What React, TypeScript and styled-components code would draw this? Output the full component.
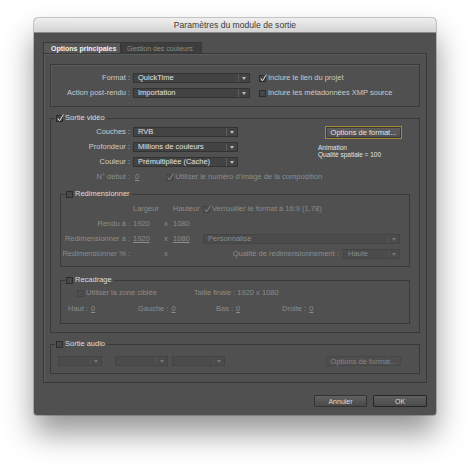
import React from "react";
import styled, { createGlobalStyle } from "styled-components";

const GlobalStyle = createGlobalStyle`
  html, body {
    margin: 0;
    padding: 0;
    background: #ffffff;
  }
  body {
    font-family: "Liberation Sans", Arial, sans-serif;
  }
  * {
    box-sizing: border-box;
  }
`;

const Page = styled.div`
  width: 470px;
  height: 464px;
  padding: 18px 0 0 34px;
  overflow: hidden;
`;

const Dialog = styled.div`
  width: 402px;
  background: #505050;
  border-radius: 4px 4px 3px 3px;
  box-shadow: 0 18px 30px rgba(0, 0, 0, 0.42), 0 0 0 1px rgba(0, 0, 0, 0.2);
  overflow: hidden;
`;

const TitleBar = styled.div`
  height: 15px;
  background: linear-gradient(#efefef, #d3d3d3);
  border-bottom: 1px solid #8a8a8a;
  color: #3c3c3c;
  font-size: 8.6px;
  line-height: 14px;
  text-align: center;
`;

const Body = styled.div`
  padding: 9px 9px 8px;
`;

const TabRow = styled.div`
  display: flex;
  height: 11px;
`;

const Tab = styled.div<{ $active?: boolean; $w: number }>`
  width: ${(p) => p.$w}px;
  padding-left: ${(p) => (p.$active ? 7 : 5)}px;
  font-size: 7px;
  line-height: 11px;
  white-space: nowrap;
  background: ${(p) => (p.$active ? "#585858" : "#3d3d3d")};
  color: ${(p) => (p.$active ? "#f2f2f2" : "#8e8e8e")};
  font-weight: ${(p) => (p.$active ? 700 : 400)};
  border: 1px solid #383838;
  border-bottom: none;
`;

const Panel = styled.div`
  border: 1px solid #383838;
  box-shadow: inset 1px 1px 0 #5c5c5c;
  padding: 10px 6px 8px;
`;

const FormatBox = styled.div`
  border: 1px solid #3a3a3a;
  box-shadow: inset 1px 1px 0 #5b5b5b;
  padding: 8px 0;
  display: grid;
  grid-template-columns: 79px 117px auto;
  grid-auto-rows: 10px;
  column-gap: 3px;
  row-gap: 5px;
  align-items: center;
`;

const Label = styled.span<{ $dim?: boolean }>`
  font-size: 7.5px;
  line-height: 10px;
  text-align: right;
  white-space: nowrap;
  color: ${(p) => (p.$dim ? "#8c8c8c" : "#cacaca")};
`;

const Text = styled.span<{ $dim?: boolean }>`
  font-size: 7.5px;
  line-height: 10px;
  white-space: nowrap;
  color: ${(p) => (p.$dim ? "#8c8c8c" : "#cacaca")};
`;

const Value = styled.span<{ $dim?: boolean }>`
  font-size: 7.5px;
  line-height: 10px;
  white-space: nowrap;
  color: ${(p) => (p.$dim ? "#8c8c8c" : "#cacaca")};
  text-decoration: underline;
  text-underline-offset: 1px;
`;

const Group = styled.fieldset<{ $mt: number; $inset?: boolean; $pt: number; $pb: number }>`
  margin: ${(p) => p.$mt}px ${(p) => (p.$inset ? 9 : 0)}px 0;
  padding: ${(p) => p.$pt}px 0 ${(p) => p.$pb}px;
  min-width: 0;
  border: 1px solid #393939;
`;

const Legend = styled.legend`
  margin-left: 4px;
  padding: 0 2px 0 1px;
  display: flex;
  align-items: center;
  gap: 2px;
  font-size: 7.5px;
  line-height: 8px;
  height: 8px;
  color: #dcdcdc;
`;

const Box = styled.span<{ $dim?: boolean }>`
  position: relative;
  width: 7px;
  height: 7px;
  flex-shrink: 0;
  border: 1px solid ${(p) => (p.$dim ? "#444444" : "#2c2c2c")};
  background: ${(p) => (p.$dim ? "#4d4d4d" : "#474747")};

  svg {
    position: absolute;
    left: 0;
    top: -2px;
  }
`;

const Check = ({ checked, dim }: { checked?: boolean; dim?: boolean }) => (
  <Box $dim={dim}>
    {checked && (
      <svg width="7" height="8" viewBox="0 0 7 8">
        <path
          d="M0.8 4.6 L2.5 6.8 L6.4 0.6"
          fill="none"
          stroke={dim ? "#8a8a8a" : "#e6e6e6"}
          strokeWidth="1"
        />
      </svg>
    )}
  </Box>
);

const Option = styled.span<{ $ml?: number }>`
  display: inline-flex;
  align-items: center;
  gap: 2px;
  margin-left: ${(p) => p.$ml ?? 0}px;
  white-space: nowrap;
`;

const SelectBox = styled.div<{ $w?: number; $dim?: boolean }>`
  width: ${(p) => (p.$w ? `${p.$w}px` : "100%")};
  height: 10px;
  display: flex;
  flex-shrink: 0;
  background: ${(p) => (p.$dim ? "#4b4b4b" : "#434343")};
  border: 1px solid ${(p) => (p.$dim ? "#444444" : "#333333")};
  color: ${(p) => (p.$dim ? "#8a8a8a" : "#e2e2e2")};
  font-size: 7.5px;
  line-height: 8px;
`;

const SelectText = styled.span`
  flex: 1;
  padding-left: 4px;
  white-space: nowrap;
  overflow: hidden;
`;

const Caret = styled.span<{ $dim?: boolean }>`
  width: 11px;
  border-left: 1px solid ${(p) => (p.$dim ? "#555555" : "#5c5c5c")};
  display: flex;
  align-items: center;
  justify-content: center;

  &::after {
    content: "";
    border-left: 2px solid transparent;
    border-right: 2px solid transparent;
    border-top: 3px solid ${(p) => (p.$dim ? "#777777" : "#bdbdbd")};
  }
`;

const Select = ({ value, w, dim }: { value?: string; w?: number; dim?: boolean }) => (
  <SelectBox $w={w} $dim={dim}>
    <SelectText>{value}</SelectText>
    <Caret $dim={dim} />
  </SelectBox>
);

const VideoTop = styled.div`
  display: flex;
  align-items: flex-start;
`;

const VideoGrid = styled.div`
  display: grid;
  grid-template-columns: 79px 105px;
  grid-auto-rows: 10px;
  column-gap: 3px;
  row-gap: 5px;
  align-items: center;
`;

const StartCell = styled.div`
  display: flex;
  align-items: center;
  padding-left: 2px;
  gap: 27px;
`;

const FormatInfo = styled.div`
  margin-left: 80px;
  margin-top: -1px;
  display: flex;
  flex-direction: column;
`;

const InfoLine = styled.span`
  font-size: 6.5px;
  line-height: 7px;
  color: #e4e4e4;
  white-space: nowrap;
`;

const Button = styled.div<{ $w: number; $h: number; $focus?: boolean; $dim?: boolean; $ml?: number }>`
  width: ${(p) => p.$w}px;
  height: ${(p) => p.$h}px;
  margin-left: ${(p) => p.$ml ?? 0}px;
  display: flex;
  align-items: center;
  justify-content: center;
  flex-shrink: 0;
  font-size: 7.5px;
  white-space: nowrap;
  color: ${(p) => (p.$dim ? "#858585" : "#e2e2e2")};
  background: ${(p) => (p.$dim ? "#4e4e4e" : "linear-gradient(#5e5e5e, #4f4f4f)")};
  border: 1px solid ${(p) => (p.$focus ? "#a48a34" : p.$dim ? "#474747" : "#2e2e2e")};
  box-shadow: ${(p) => (p.$focus ? "inset 0 0 0 1px #3a3a3a" : "none")};
`;

const InfoBlock = styled.div`
  margin-top: 5px;
  display: flex;
  flex-direction: column;
`;

const ResizeGrid = styled.div`
  display: grid;
  grid-template-columns: 69px 28px 6px 27px 197px;
  grid-auto-rows: 10px;
  column-gap: 3px;
  row-gap: 5px;
  align-items: center;
`;

const Col = styled.div<{ $c: number }>`
  grid-column: ${(p) => p.$c};
  display: flex;
  align-items: center;
  white-space: nowrap;
`;

const QualityCell = styled.div`
  grid-column: 5;
  display: flex;
  align-items: center;
  justify-content: flex-end;
  gap: 4px;
`;

const CropRow = styled.div<{ $pl: number; $mt?: number }>`
  display: flex;
  align-items: center;
  height: 10px;
  padding-left: ${(p) => p.$pl}px;
  margin-top: ${(p) => p.$mt ?? 0}px;
`;

const CropCell = styled.div<{ $w?: number }>`
  width: ${(p) => (p.$w ? `${p.$w}px` : "auto")};
  flex-shrink: 0;
  display: flex;
  align-items: center;
  gap: 3px;
  white-space: nowrap;
`;

const AudioRow = styled.div`
  display: flex;
  align-items: center;
  height: 10px;
  padding: 0 18px 0 7px;
  gap: 13px;
`;

const AudioPair = styled.div`
  display: flex;
  gap: 4px;
`;

const Footer = styled.div`
  display: flex;
  justify-content: flex-end;
  gap: 6px;
  margin-top: 12px;
`;

const DialogButton = styled.div<{ $w: number; $default?: boolean }>`
  width: ${(p) => p.$w}px;
  height: 12px;
  display: flex;
  align-items: center;
  justify-content: center;
  font-size: 7px;
  color: #dedede;
  background: linear-gradient(#606060, #4a4a4a);
  border: ${(p) => (p.$default ? "1.5px solid #262626" : "1px solid #333333")};
  border-radius: 1px;
`;

export default function App() {
  return (
    <>
      <GlobalStyle />
      <Page>
        <Dialog>
          <TitleBar>Paramètres du module de sortie</TitleBar>
          <Body>
            <TabRow>
              <Tab $active $w={78}>Options principales</Tab>
              <Tab $w={81}>Gestion des couleurs</Tab>
            </TabRow>
            <Panel>
              <FormatBox>
                <Label>Format :</Label>
                <Select value="QuickTime" w={117} />
                <Option $ml={6}>
                  <Check checked />
                  <Text>Inclure le lien du projet</Text>
                </Option>
                <Label>Action post-rendu :</Label>
                <Select value="Importation" w={117} />
                <Option $ml={6}>
                  <Check />
                  <Text>Inclure les métadonnées XMP source</Text>
                </Option>
              </FormatBox>

              <Group $mt={7} $pt={5} $pb={8}>
                <Legend>
                  <Check checked />
                  Sortie vidéo
                </Legend>
                <VideoTop>
                  <VideoGrid>
                    <Label>Couches :</Label>
                    <Select value="RVB" w={105} />
                    <Label>Profondeur :</Label>
                    <Select value="Millions de couleurs" w={105} />
                    <Label>Couleur :</Label>
                    <Select value="Prémultipliée (Cache)" w={105} />
                    <Label $dim>N° début :</Label>
                    <StartCell>
                      <Value $dim>0</Value>
                      <Option>
                        <Check checked dim />
                        <Text $dim>Utiliser le numéro d'image de la composition</Text>
                      </Option>
                    </StartCell>
                  </VideoGrid>
                  <FormatInfo>
                    <Button $w={77} $h={13} $ml={7} $focus>
                      Options de format...
                    </Button>
                    <InfoBlock>
                      <InfoLine>Animation</InfoLine>
                      <InfoLine>Qualité spatiale = 100</InfoLine>
                    </InfoBlock>
                  </FormatInfo>
                </VideoTop>

                <Group $mt={8} $inset $pt={6} $pb={7}>
                  <Legend>
                    <Check />
                    Redimensionner
                  </Legend>
                  <ResizeGrid>
                    <Col $c={2}>
                      <Text $dim>Largeur</Text>
                    </Col>
                    <Col $c={4}>
                      <Text $dim>Hauteur</Text>
                    </Col>
                    <Col $c={5}>
                      <Option>
                        <Check checked dim />
                        <Text $dim>Verrouiller le format à 16:9 (1,78)</Text>
                      </Option>
                    </Col>

                    <Label $dim>Rendu à :</Label>
                    <Text $dim>1920</Text>
                    <Text $dim>x</Text>
                    <Text $dim>1080</Text>
                    <span />

                    <Label $dim>Redimensionner à :</Label>
                    <Value $dim>1920</Value>
                    <Text $dim>x</Text>
                    <Value $dim>1080</Value>
                    <Select value="Personnalisé" dim />

                    <Label $dim>Redimensionner % :</Label>
                    <Col $c={3}>
                      <Text $dim>x</Text>
                    </Col>
                    <QualityCell>
                      <Text $dim>Qualité de redimensionnement :</Text>
                      <Select value="Haute" w={57} dim />
                    </QualityCell>
                  </ResizeGrid>
                </Group>

                <Group $mt={9} $inset $pt={4} $pb={9}>
                  <Legend>
                    <Check />
                    Recadrage
                  </Legend>
                  <CropRow $pl={16}>
                    <CropCell $w={117}>
                      <Option>
                        <Check dim />
                        <Text $dim>Utiliser la zone ciblée</Text>
                      </Option>
                    </CropCell>
                    <CropCell>
                      <Text $dim>Taille finale : 1920 x 1080</Text>
                    </CropCell>
                  </CropRow>
                  <CropRow $pl={7} $mt={6}>
                    <CropCell $w={70}>
                      <Text $dim>Haut :</Text>
                      <Value $dim>0</Value>
                    </CropCell>
                    <CropCell $w={78}>
                      <Text $dim>Gauche :</Text>
                      <Value $dim>0</Value>
                    </CropCell>
                    <CropCell $w={66}>
                      <Text $dim>Bas :</Text>
                      <Value $dim>0</Value>
                    </CropCell>
                    <CropCell>
                      <Text $dim>Droite :</Text>
                      <Value $dim>0</Value>
                    </CropCell>
                  </CropRow>
                </Group>
              </Group>

              <Group $mt={7} $pt={8} $pb={7}>
                <Legend>
                  <Check />
                  Sortie audio
                </Legend>
                <AudioRow>
                  <Select w={44} dim />
                  <AudioPair>
                    <Select w={53} dim />
                    <Select w={53} dim />
                  </AudioPair>
                  <Button $w={75} $h={10} $dim style={{ marginLeft: "auto" }}>
                    Options de format...
                  </Button>
                </AudioRow>
              </Group>
            </Panel>
            <Footer>
              <DialogButton $w={53}>Annuler</DialogButton>
              <DialogButton $w={54} $default>
                OK
              </DialogButton>
            </Footer>
          </Body>
        </Dialog>
      </Page>
    </>
  );
}
